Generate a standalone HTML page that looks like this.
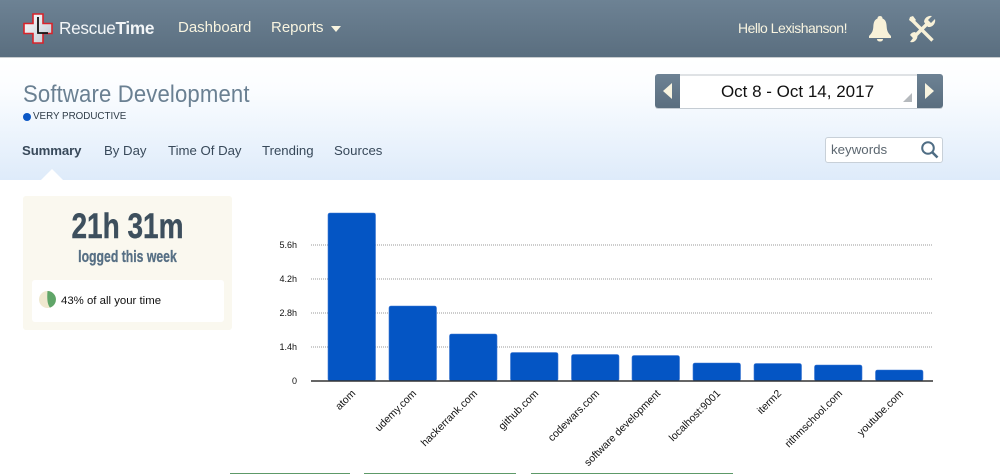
<!DOCTYPE html>
<html><head><meta charset="utf-8">
<style>
html,body{margin:0;padding:0;background:#fff}
body{width:1000px;height:474px;position:relative;overflow:hidden;font-family:"Liberation Sans",sans-serif}
.a{position:absolute;white-space:nowrap}
#top{left:0;top:0;width:1000px;height:57px;background:linear-gradient(#6d8294,#5a6e7f);border-bottom:1px solid #c9cdd0}
#sub{left:0;top:58px;width:1000px;height:122px;background:linear-gradient(#fff,#fbfdff 25%,#deebfa)}
.nav{color:#f8f4e0;font-size:15px;line-height:18px}
.tab{color:#38495a;font-size:13.2px;line-height:16px;top:142.500px}
</style></head><body>
<div class="a" id="top"></div>
<div class="a" id="sub"></div>

<svg class="a" style="left:23px;top:13px" width="30" height="31" viewBox="0 0 30 31">
<defs><linearGradient id="lg" x1="0" y1="0" x2="1" y2="1"><stop offset="0" stop-color="#fff"/><stop offset="1" stop-color="#bcc6d0"/></linearGradient></defs>
<path d="M10 1H20V10.500H29V20.500H20V30H10V20.500H1V10.500H10Z" fill="url(#lg)" stroke="#d8232a" stroke-width="1.600"/>
<path d="M15 4V20H25" fill="none" stroke="#111" stroke-width="1.800"/>
</svg>
<div class="a" style="left:59px;top:18px;font-size:17.200px;line-height:20px;color:#f2f5f7;letter-spacing:-.3px">Rescue<b>Time</b></div>
<div class="a nav" style="left:178px;top:19px">Dashboard</div>
<div class="a nav" style="left:271px;top:19px">Reports</div>
<div class="a" style="left:331px;top:26px;width:0;height:0;border-left:5px solid transparent;border-right:5px solid transparent;border-top:6px solid #f8f4e0"></div>
<div class="a" style="left:738px;top:20px;font-size:14px;line-height:17px;color:#f8f4e0;letter-spacing:-.52px">Hello Lexishanson!</div>

<svg class="a" style="left:868px;top:15px" width="24" height="27" viewBox="0 0 24 27">
<path d="M12 1C14 1 14.500 2.500 14.500 3.500C18 5 18.500 8 18.700 12C19 16 20 18 23 21V23H1V21C4 18 5 16 5.300 12C5.500 8 6 5 9.500 3.500C9.500 2.500 10 1 12 1Z" fill="#f8f1d8"/>
<path d="M9 24H15C15 26 13.500 26.500 12 26.500C10.500 26.500 9 26 9 24Z" fill="#f8f1d8"/>
</svg>
<svg class="a" style="left:908px;top:15px" width="28" height="28" viewBox="0 0 28 28">
<path d="M3 4L24.500 25.500" stroke="#f8f1d8" stroke-width="3.400" fill="none"/>
<path d="M2 2L5 1L8 5L5 8L1 5Z" fill="#f8f1d8"/>
<path d="M5 23L19 9" stroke="#f8f1d8" stroke-width="3.400" fill="none"/>
<path d="M16 7A6.500 6.500 0 0 1 24 1L20 5L23 8L27 4A6.500 6.500 0 0 1 20 12Z" fill="#f8f1d8"/>
<path d="M9 19A6 6 0 0 1 2 27L5 23L2 20A6 6 0 0 1 7 17Z" fill="#f8f1d8"/>
</svg>

<div class="a" style="left:23px;top:81px;font-size:24px;line-height:28px;color:#6a8092;letter-spacing:.15px;transform:scaleX(.922);transform-origin:0 0">Software Development</div>
<div class="a" style="left:23px;top:113px;width:8px;height:8px;border-radius:50%;background:#0b57c6"></div>
<div class="a" style="left:33px;top:110px;font-size:9.800px;line-height:13px;color:#2f3c48">VERY PRODUCTIVE</div>
<div class="a tab" style="left:22px;font-weight:bold;letter-spacing:-.1px">Summary</div>
<div class="a tab" style="left:104px">By Day</div>
<div class="a tab" style="left:168px">Time Of Day</div>
<div class="a tab" style="left:262px">Trending</div>
<div class="a tab" style="left:334px">Sources</div>
<div class="a" style="left:41px;top:169px;width:0;height:0;border-left:11px solid transparent;border-right:11px solid transparent;border-bottom:11px solid #fff"></div>

<div class="a" style="left:655px;top:74px;width:288px;height:34px;border-radius:3px;background:#fff;box-shadow:inset 0 2px 0 #dfe2e5,0 1px 0 #c5ccd3"></div>
<div class="a" style="left:655px;top:74px;width:25px;height:34px;border-radius:3px 0 0 3px;background:linear-gradient(#6d8294,#5a6e7f)"></div>
<div class="a" style="left:917px;top:74px;width:26px;height:34px;border-radius:0 3px 3px 0;background:linear-gradient(#6d8294,#5a6e7f)"></div>
<div class="a" style="left:663px;top:83px;width:0;height:0;border-top:8px solid transparent;border-bottom:8px solid transparent;border-right:9px solid #f8f4e0"></div>
<div class="a" style="left:925px;top:83px;width:0;height:0;border-top:8px solid transparent;border-bottom:8px solid transparent;border-left:9px solid #f8f4e0"></div>
<div class="a" style="left:679px;top:82px;width:237px;text-align:center;font-size:17px;line-height:20px;color:#111">Oct 8 - Oct 14, 2017</div>
<div class="a" style="left:903px;top:93px;width:0;height:0;border-left:9px solid transparent;border-bottom:9px solid #b5b9bd"></div>

<div class="a" style="left:825px;top:137px;width:116px;height:24px;background:#fff;border:1px solid #c8d0d8;border-radius:3px"></div>
<div class="a" style="left:831px;top:142px;font-size:13.300px;line-height:16px;color:#5c6770">keywords</div>
<svg class="a" style="left:920px;top:140px" width="19" height="19" viewBox="0 0 19 19">
<circle cx="8" cy="8" r="5.800" fill="none" stroke="#4f6d84" stroke-width="2"/>
<path d="M12.500 12.500L17.500 17.500" stroke="#4f6d84" stroke-width="2.600"/>
</svg>

<div class="a" style="left:23px;top:196px;width:209px;height:134px;background:#faf8ef;border-radius:3px"></div>
<div class="a" style="left:23px;top:207px;width:209px;text-align:center;font-size:35px;line-height:40px;font-weight:bold;color:#3d4f5d;transform:scaleX(.8);-webkit-text-stroke:.4px #3d4f5d">21h 31m</div>
<div class="a" style="left:23px;top:247px;width:209px;text-align:center;font-size:17px;line-height:20px;font-weight:bold;color:#566f84;transform:scaleX(.72);-webkit-text-stroke:.3px #566f84">logged this week</div>
<div class="a" style="left:32px;top:280px;width:192px;height:42px;background:#fff;border-radius:3px"></div>
<svg class="a" style="left:39px;top:291px" width="17" height="17" viewBox="0 0 17 17">
<circle cx="8.500" cy="8.500" r="8.500" fill="#efe8cf"/>
<path d="M8.500 0A8.500 8.500 0 0 1 11 16.600C8 13 8 6 8.500 0Z" fill="#5fa568"/>
</svg>
<div class="a" style="left:61px;top:294px;font-size:11.400px;line-height:14px;color:#111">43% of all your time</div>

<svg class="a" style="left:0;top:0" width="1000" height="474" viewBox="0 0 1000 474" font-family="'Liberation Sans',sans-serif" font-size="9" fill="#111">
<g stroke="#999" stroke-width="1" stroke-dasharray="1 1">
<path d="M311 245H933M311 279H933M311 313H933M311 347H933"/>
</g>
<g fill="#0455c4" stroke="#3f78d2" stroke-width=".6">
<rect x="328" y="213" width="47.500" height="168" rx="2"/>
<rect x="389" y="306" width="47.500" height="75" rx="2"/>
<rect x="449.500" y="334" width="47.500" height="47" rx="2"/>
<rect x="510.500" y="352.500" width="47.500" height="28.500" rx="2"/>
<rect x="571.500" y="354.500" width="47.500" height="26.500" rx="2"/>
<rect x="632" y="355.500" width="47.500" height="25.500" rx="2"/>
<rect x="693" y="363" width="47.500" height="18" rx="2"/>
<rect x="754" y="363.500" width="47.500" height="17.500" rx="2"/>
<rect x="814.500" y="365" width="47.500" height="16" rx="2"/>
<rect x="875.500" y="370" width="47.500" height="11" rx="2"/>
</g>
<path d="M311 381H933" stroke="#333" stroke-width="1.500"/>
<g text-anchor="end">
<text x="297" y="248">5.6h</text>
<text x="297" y="282">4.2h</text>
<text x="297" y="316">2.8h</text>
<text x="297" y="350">1.4h</text>
<text x="297" y="384">0</text>
</g>
<g text-anchor="end" font-size="10.500">
<text transform="translate(356 394) rotate(-45)">atom</text>
<text transform="translate(417 394) rotate(-45)">udemy.com</text>
<text transform="translate(478 394) rotate(-45)">hackerrank.com</text>
<text transform="translate(539 394) rotate(-45)">github.com</text>
<text transform="translate(600 394) rotate(-45)">codewars.com</text>
<text transform="translate(661 394) rotate(-45)">software development</text>
<text transform="translate(721 394) rotate(-45)">localhost:9001</text>
<text transform="translate(782 394) rotate(-45)">iterm2</text>
<text transform="translate(843 394) rotate(-45)">rithmschool.com</text>
<text transform="translate(904 394) rotate(-45)">youtube.com</text>
</g>
</svg>

<div class="a" style="left:230px;top:473px;width:120px;height:1px;background:#5d9a68"></div>
<div class="a" style="left:364px;top:473px;width:152px;height:1px;background:#5d9a68"></div>
<div class="a" style="left:531px;top:473px;width:202px;height:1px;background:#5d9a68"></div>
</body></html>
